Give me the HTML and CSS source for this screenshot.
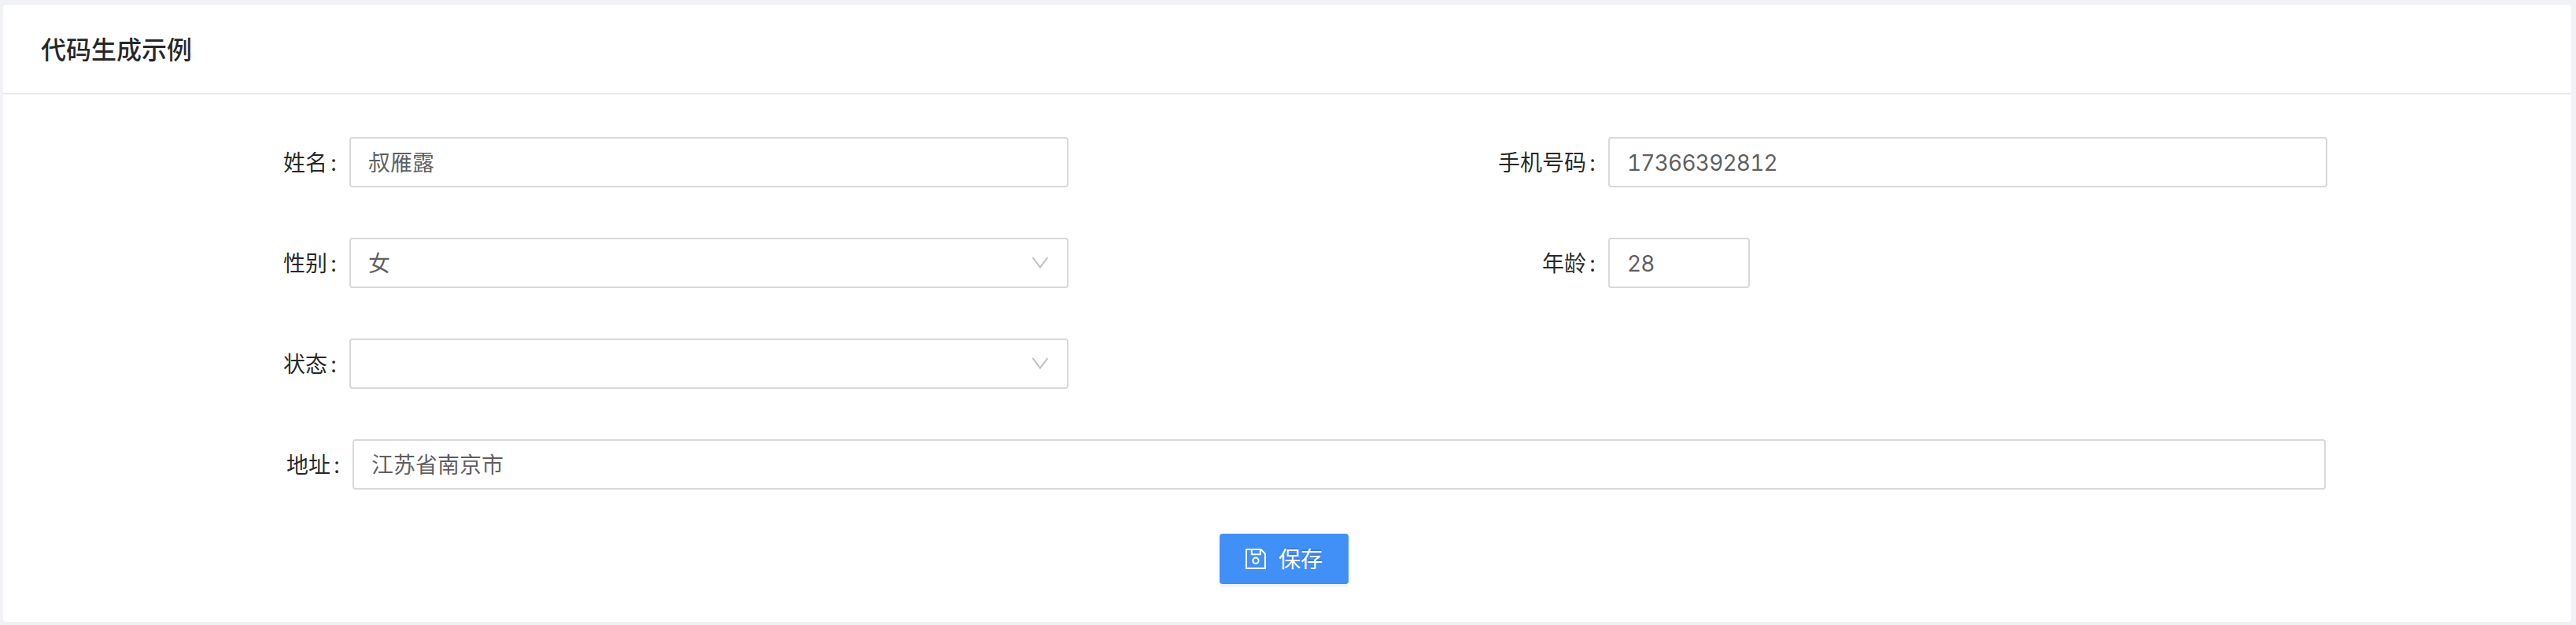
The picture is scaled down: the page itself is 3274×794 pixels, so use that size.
FILE: index.html
```html
<!DOCTYPE html>
<html lang="zh-CN">
<head>
<meta charset="utf-8">
<title>代码生成示例</title>
<link rel="stylesheet" href="styles.css">
</head>
<body>
<main class="card">
  <header class="card-head"><h1 class="title">代码生成示例</h1></header>
  <form class="form">
    <div class="row">
      <div class="field"><label class="label">姓名<span class="colon">:</span></label><div class="control">叔雁露</div></div>
      <div class="field"><label class="label">手机号码<span class="colon">:</span></label><div class="control number">17366392812</div></div>
    </div>
    <div class="row">
      <div class="field"><label class="label">性别<span class="colon">:</span></label><div class="control select">女<svg class="arrow" viewBox="0 0 22 16"><path d="M1.5 1L11 13.5L20.5 1"/></svg></div></div>
      <div class="field"><label class="label">年龄<span class="colon">:</span></label><div class="control number short">28</div></div>
    </div>
    <div class="row">
      <div class="field"><label class="label">状态<span class="colon">:</span></label><div class="control select"><svg class="arrow" viewBox="0 0 22 16"><path d="M1.5 1L11 13.5L20.5 1"/></svg></div></div>
    </div>
    <div class="row">
      <div class="field wide"><label class="label">地址<span class="colon">:</span></label><div class="control">江苏省南京市</div></div>
    </div>
    <div class="actions">
      <button type="button" class="save"><svg class="save-icon" viewBox="0 0 26 26"><path d="M1 1H19.5L25 6.5V25H1ZM7.8 1V7.2H18.8V1"/><circle cx="13" cy="15.2" r="3.6"/></svg><span>保存</span></button>
    </div>
  </form>
</main>
</body>
</html>
```
FILE: styles.css
```css
* { box-sizing: border-box; }
body {
  margin: 0;
  padding: 6px 6px 4px 4px;
  height: 794px;
  background: #f0f2f5;
  font: 28px/42px Inter, "Noto Sans CJK SC", sans-serif;
  font-feature-settings: "tnum";
  color: rgba(0, 0, 0, .85);
}
.card { height: 784px; background: #fff; border-radius: 4px; }
.card-head {
  height: 114px;
  padding: 3px 48px 0;
  border-bottom: 2px solid #e8e8e8;
  display: flex;
  align-items: center;
}
.title { margin: 0; font-size: 32px; line-height: 48px; font-weight: 500; }
.form { padding-top: 54px; }
.row { display: grid; grid-template-columns: 1600px 1600px; height: 128px; }
.field { display: grid; grid-template-columns: 440px 914px; height: 64px; align-items: center; }
.field.wide { grid-template-columns: 444px 2508px; }
.label { display: flex; justify-content: flex-end; padding-top: 2px; }
.colon { width: 8px; margin: 0 16px 0 4px; text-align: center; }
.control {
  height: 64px;
  padding: 2px 22px 0;
  border: 2px solid #d9d9d9;
  border-radius: 4px;
  display: flex;
  align-items: center;
  color: rgba(0, 0, 0, .65);
}
.number { letter-spacing: -.8px; }
.select { padding-right: 23px; }
.short { width: 180px; }
.arrow { width: 22px; height: 16px; margin: 0 0 2px auto; fill: none; stroke: #bfbfbf; stroke-width: 2; }
.actions { display: flex; padding: 0 0 0 1546px; margin-top: -8px; }
.save {
  width: 164px;
  height: 64px;
  padding: 0;
  border: 0;
  border-radius: 4px;
  background: #4090f7;
  box-shadow: 0 4px 0 rgba(0, 0, 0, .045);
  color: #fff;
  font: inherit;
  text-shadow: 0 -2px 0 rgba(0, 0, 0, .12);
  display: flex;
  align-items: center;
  justify-content: center;
  gap: 16px;
}
.save span { padding-top: 1px; }
.save-icon { width: 26px; height: 26px; fill: none; stroke: #fff; stroke-width: 2; }
```
